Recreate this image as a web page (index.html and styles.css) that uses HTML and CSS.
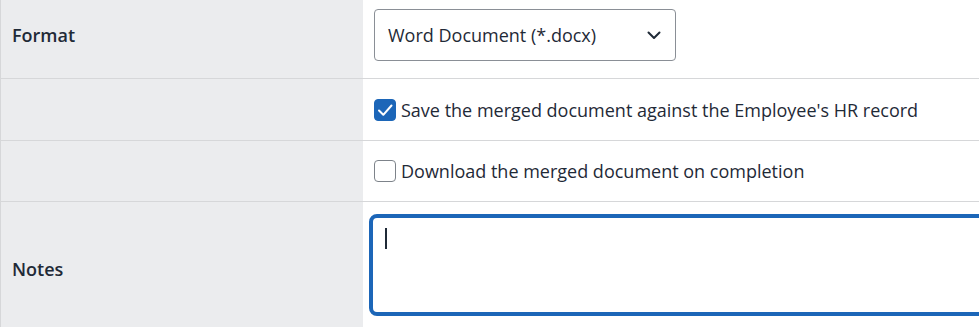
FILE: index.html
```html
<!DOCTYPE html>
<html lang="en">
<head>
    <meta charset="UTF-8">
    <title>Merge document</title>
    <link rel="stylesheet" href="styles.css">
</head>
<body>

    <div class="form-table">
        <div class="form-row row-format">
            <div class="form-label">Format</div>
            <div class="form-value">
                <div class="select-box">
                    <span>Word Document (*.docx)</span>
                    <svg class="chevron" width="14" height="9" viewBox="0 0 14 9">
                        <path d="M1.5 1.5 L7 7 L12.5 1.5" fill="none" stroke="#1f2a37" stroke-width="2" stroke-linecap="round" stroke-linejoin="round"/>
                    </svg>
                </div>
            </div>
        </div>

        <div class="form-row row-check">
            <div class="form-label"></div>
            <div class="form-value">
                <label class="check">
                    <span class="box checked">
                        <svg width="22" height="22" viewBox="0 0 22 22">
                            <path d="M5 11.5 L9.3 15.8 L17.5 6.5" fill="none" stroke="#ffffff" stroke-width="2" stroke-linecap="round" stroke-linejoin="round"/>
                        </svg>
                    </span>
                    Save the merged document against the Employee's HR record
                </label>
            </div>
        </div>

        <div class="form-row row-check">
            <div class="form-label"></div>
            <div class="form-value">
                <label class="check">
                    <span class="box"></span>
                    Download the merged document on completion
                </label>
            </div>
        </div>

        <div class="form-row row-notes">
            <div class="form-label">Notes</div>
            <div class="form-value">
                <div class="notes-box"><span class="caret"></span></div>
            </div>
        </div>
    </div>

</body>
</html>
```

FILE: styles.css
```css
body {
    margin: 0;
    background-color: #ffffff;
    font-family: "Open Sans", "Noto Sans", sans-serif;
    color: #1f2a37;
    overflow: hidden;
}

.form-table {
    border-left: 1px solid #d6d7d9;
}

.form-row {
    display: grid;
    grid-template-columns: 362px 1fr;
    border-bottom: 1px solid #d6d7d9;
}

.form-label {
    background-color: #ebecee;
    padding-left: 11px;
    display: flex;
    align-items: center;
    font-size: 18px;
    font-weight: 600;
}

.form-value {
    padding-left: 11px;
    display: flex;
    align-items: center;
}

.row-format {
    height: 78px;
}

.row-format .form-label {
    padding-bottom: 8px;
}

.row-format .form-value {
    align-items: flex-start;
    padding-top: 9px;
}

.row-check {
    height: 61px;
}

.row-check:nth-child(3) {
    height: 60px;
}

.row-notes {
    height: 134px;
    border-bottom: none;
}

.row-notes .form-value {
    align-items: flex-start;
    padding-top: 12px;
}

.select-box {
    width: 302px;
    height: 52px;
    box-sizing: border-box;
    border: 1px solid #8a8f96;
    border-radius: 4px;
    display: flex;
    align-items: center;
    justify-content: space-between;
    padding: 0 14px 0 13px;
    font-size: 18px;
}

.check {
    display: flex;
    align-items: center;
    gap: 5px;
    font-size: 18px;
}

.box {
    width: 22px;
    height: 22px;
    box-sizing: border-box;
    border: 1px solid #7d838a;
    border-radius: 4px;
    display: inline-block;
}

.box.checked {
    background-color: #1c66b8;
    border-color: #1c66b8;
}

.box svg {
    display: block;
    margin: -1px;
}

.notes-box {
    margin-left: -5px;
    width: 640px;
    height: 102px;
    box-sizing: border-box;
    border: 4px solid #1c66b8;
    border-radius: 8px;
    padding: 10px 12px;
}

.caret {
    display: block;
    width: 2px;
    height: 21px;
    background-color: #1f2a37;
}
```
